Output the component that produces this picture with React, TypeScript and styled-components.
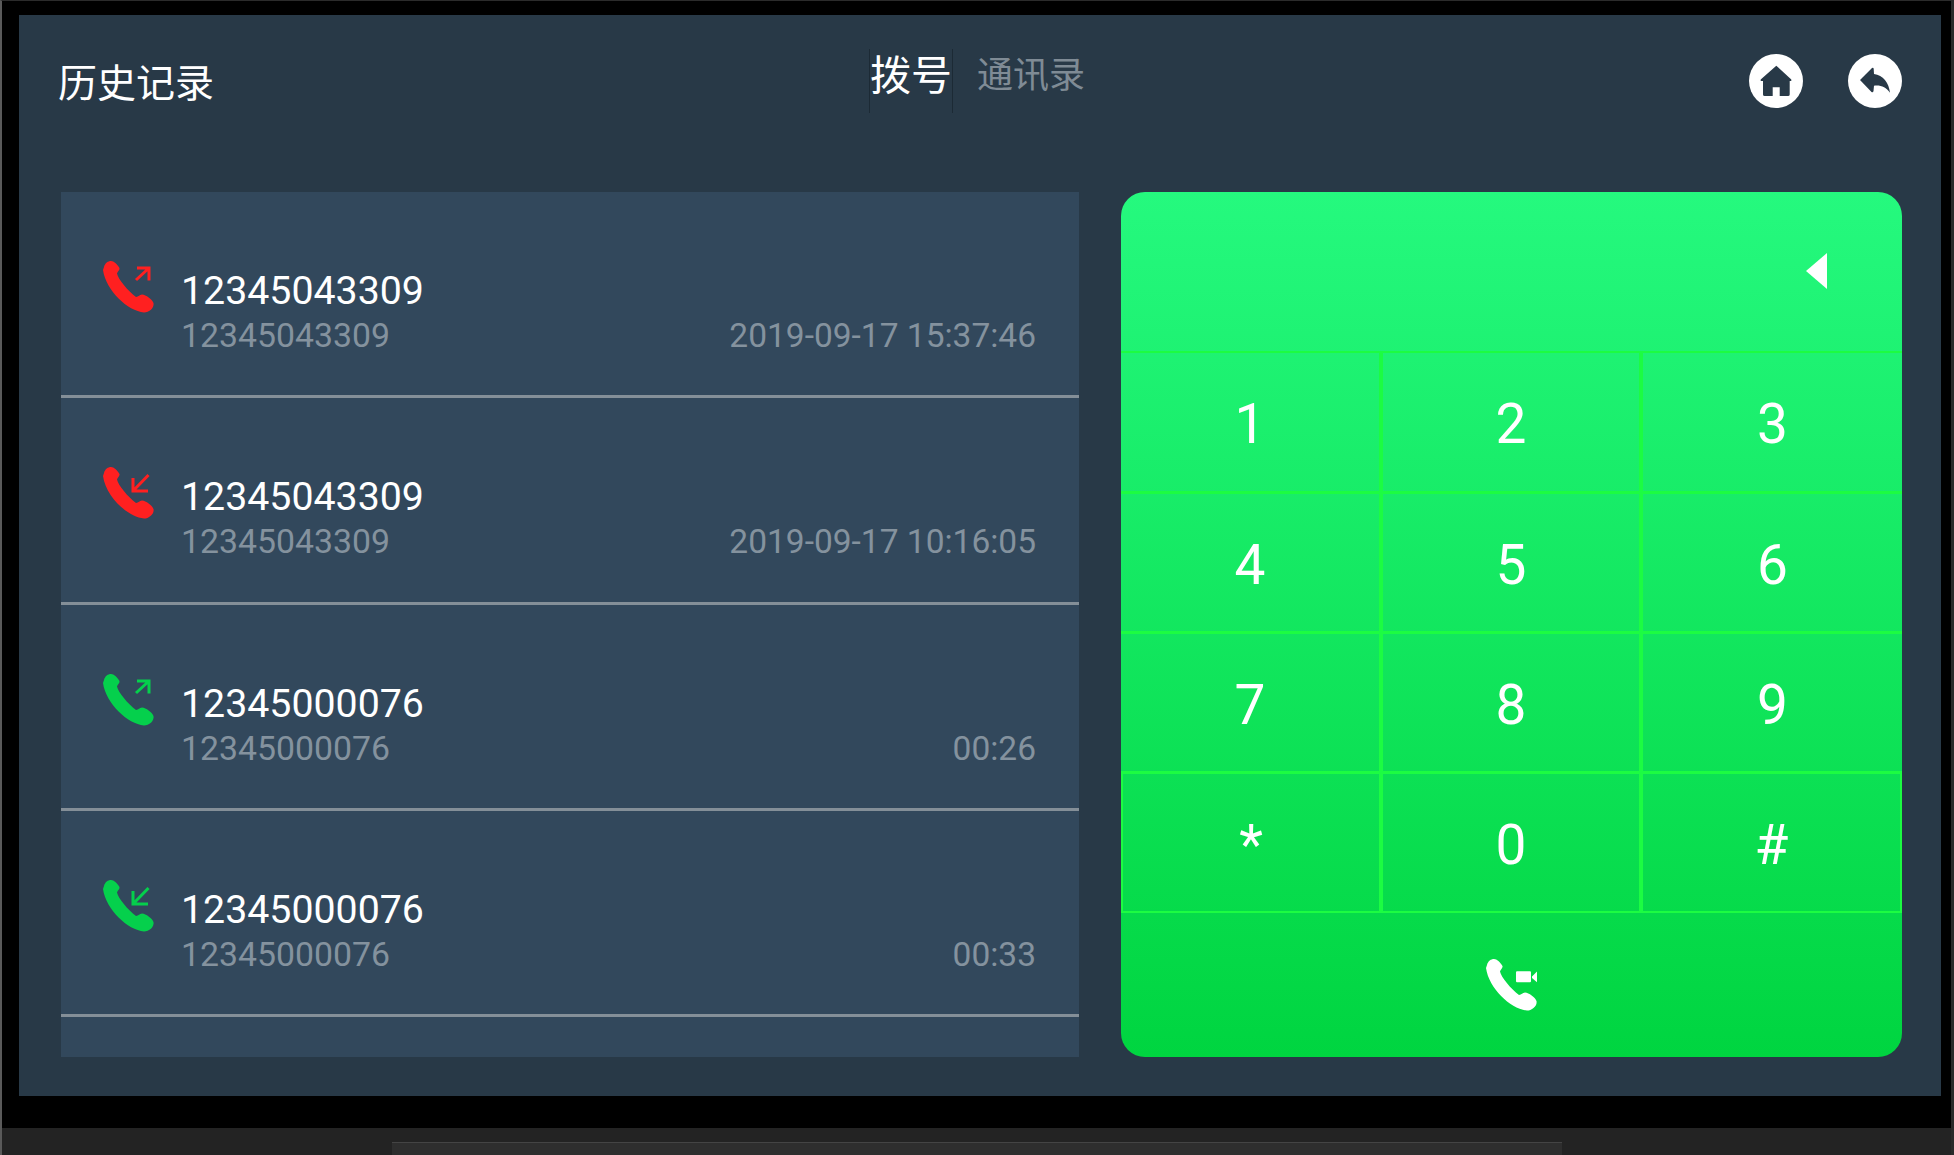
import React from 'react';
import styled, { createGlobalStyle } from 'styled-components';

const GlobalStyle = createGlobalStyle`
  html, body {
    margin: 0;
    padding: 0;
    background: #000;
  }
  body {
    font-family: Roboto, "Noto Sans CJK SC", sans-serif;
  }
`;

const Device = styled.div`
  width: 1954px;
  height: 1155px;
  box-sizing: border-box;
  overflow: hidden;
  background: #000;
  border-top: 1px solid #2b2b2b;
  border-left: 2px solid #5a5a5a;
  border-right: 3px solid #2a2a2a;
`;

const Screen = styled.div`
  width: 1922px;
  height: 1081px;
  margin: 14px 0 0 17px;
  background: #283947;
  display: flex;
  flex-direction: column;
`;

const Header = styled.header`
  height: 177px;
  flex-shrink: 0;
  display: flex;
  align-items: flex-start;
  padding: 0 39px 0 39px;
`;

const Title = styled.div`
  width: 811px;
  margin-top: 48px;
  font-size: 39px;
  line-height: 42px;
  color: #fff;
`;

const Tabs = styled.div`
  display: flex;
  margin-top: 34px;
`;

const Tab = styled.div<{ $active?: boolean }>`
  box-sizing: border-box;
  height: 64px;
  padding-top: 4px;
  margin-left: ${(p) => (p.$active ? '0' : '24px')};
  font-size: ${(p) => (p.$active ? '41px' : '36px')};
  line-height: 46px;
  color: ${(p) => (p.$active ? '#fff' : '#7f8b95')};
  border-left: ${(p) => (p.$active ? '1px solid #1c2a35' : 'none')};
  border-right: ${(p) => (p.$active ? '1px solid #1c2a35' : 'none')};
`;

const Actions = styled.div`
  display: flex;
  gap: 45px;
  margin-left: auto;
  margin-top: 39px;
`;

const RoundIcon = styled.svg`
  width: 54px;
  height: 54px;
  display: block;
`;

const Body = styled.div`
  flex: 1;
  display: flex;
  gap: 42px;
  padding: 0 39px 39px 42px;
  min-height: 0;
`;

const CallList = styled.div`
  width: 1018px;
  background: #32485c;
`;

const Row = styled.div`
  box-sizing: border-box;
  height: 206.33px;
  padding: 69px 43px 0 42px;
  display: flex;
  border-bottom: 3px solid #848f98;
`;

const CallIcon = styled.svg`
  width: 52px;
  height: 52px;
  flex-shrink: 0;
  color: ${(p) => p.color};
`;

const RowText = styled.div`
  flex: 1;
  margin-left: 26px;
  margin-top: 8px;
`;

const Name = styled.div`
  font-size: 39.3px;
  line-height: 44px;
  color: #fff;
`;

const SubRow = styled.div`
  display: flex;
  justify-content: space-between;
  margin-top: 3px;
  font-size: 33.8px;
  line-height: 40px;
  color: #84929e;
`;

const CallInfo = styled.span`
  font-size: 33.5px;
`;

const Keypad = styled.div`
  width: 781px;
  border-radius: 24px;
  overflow: hidden;
  display: flex;
  flex-direction: column;
  background: linear-gradient(180deg, #25f97e 0%, #00d540 100%);
`;

const Display = styled.div`
  box-sizing: border-box;
  height: 158.5px;
  padding: 61px 75px 0 0;
  display: flex;
  justify-content: flex-end;
`;

const Backspace = styled.div`
  width: 0;
  height: 0;
  border-style: solid;
  border-width: 18.5px 21px 18.5px 0;
  border-color: transparent #fff transparent transparent;
`;

const Keys = styled.div`
  display: grid;
  grid-template-columns: 262px 260px 259px;
  grid-auto-rows: 140px;
`;

const Key = styled.div<{ $col: number; $row: number }>`
  box-sizing: border-box;
  display: flex;
  align-items: center;
  justify-content: center;
  padding-top: 5px;
  font-size: 55px;
  color: #fff;
  border-top: ${(p) => (p.$row > 0 ? '3px' : '2px')} solid #1cfc42;
  border-left: ${(p) => (p.$row === 3 && p.$col === 0 ? '2px solid #1cfc42' : 'none')};
  border-right: ${(p) =>
    p.$col < 2 ? '4px solid #1cfc42' : p.$row === 3 ? '2px solid #1cfc42' : 'none'};
`;

const CallBar = styled.div`
  flex: 1;
  display: flex;
  align-items: center;
  justify-content: center;
  border-top: 2px solid #1cfc42;
`;

const CallGlyph = styled.svg`
  width: 52px;
  height: 54px;
  display: block;
  margin-top: 2px;
`;

const Base = styled.div`
  margin-top: 32px;
  height: 30px;
  box-sizing: border-box;
  padding: 14px 0 0 390px;
  background: #232323;
`;

const BaseInset = styled.div`
  width: 1170px;
  height: 16px;
  background: #2e2e2e;
  border-top: 1px solid #444;
`;

const HANDSET =
  'M1 6C2 2 5 0 8 0C11 0 14 3 16.5 7C17 9 14.5 10.5 14 12.5C15 18 25 30 33 36C35.5 36 36.5 33.5 39 33.5C43 34 49 38 50.5 42C51.5 47 46 51.5 41 51.5C25 50 3 30 0 9Z';

const PhoneIcon = ({ color, incoming }: { color: string; incoming?: boolean }) => (
  <CallIcon color={color} viewBox="0 0 52 52">
    <path d={HANDSET} fill="currentColor" />
    <path
      d={incoming ? 'M45.5 8L30 24M30 11V24H45' : 'M33 19L46 7M34 7H46V19.5'}
      fill="none"
      stroke="currentColor"
      strokeWidth="3"
    />
  </CallIcon>
);

const calls = [
  { number: '12345043309', info: '2019-09-17 15:37:46', color: '#ff2020', incoming: false },
  { number: '12345043309', info: '2019-09-17 10:16:05', color: '#ff2020', incoming: true },
  { number: '12345000076', info: '00:26', color: '#05d04c', incoming: false },
  { number: '12345000076', info: '00:33', color: '#05d04c', incoming: true },
];

const keys = ['1', '2', '3', '4', '5', '6', '7', '8', '9', '*', '0', '#'];

const App = () => {
  return (
    <Device>
      <GlobalStyle />
      <Screen>
        <Header>
          <Title>历史记录</Title>
          <Tabs>
            <Tab $active>拨号</Tab>
            <Tab>通讯录</Tab>
          </Tabs>
          <Actions>
            <RoundIcon viewBox="0 0 54 54">
              <circle cx="27" cy="27" r="27" fill="#fff" />
              <path
                d="M27.3 11.7L42.3 25.5V27H40.7V40.5Q40.7 42 39 42H30.7V33.3H23.7V42H15.7Q14 42 14 40.5V27H11.7V25.5Z"
                fill="#283947"
              />
            </RoundIcon>
            <RoundIcon viewBox="0 0 54 54">
              <circle cx="27" cy="27" r="27" fill="#fff" />
              <path
                d="M12 26L24 14Q25.5 13 25.7 15L26 20C35 21 41 29 42 38.7C38 33 33 31 26 31.7L25.5 37Q25 39 23.5 38Z"
                fill="#283947"
              />
            </RoundIcon>
          </Actions>
        </Header>
        <Body>
          <CallList>
            {calls.map((call, i) => (
              <Row key={i}>
                <PhoneIcon color={call.color} incoming={call.incoming} />
                <RowText>
                  <Name>{call.number}</Name>
                  <SubRow>
                    <span>{call.number}</span>
                    <CallInfo>{call.info}</CallInfo>
                  </SubRow>
                </RowText>
              </Row>
            ))}
          </CallList>
          <Keypad>
            <Display>
              <Backspace />
            </Display>
            <Keys>
              {keys.map((k, i) => (
                <Key key={k} $col={i % 3} $row={Math.floor(i / 3)}>
                  {k}
                </Key>
              ))}
            </Keys>
            <CallBar>
              <CallGlyph viewBox="0 0 52 54">
                <path d={HANDSET} fill="#fff" />
                <path d="M30 13.5Q30 12.3 31 12.3H44Q45 12.3 45 13.5V22Q45 23.3 44 23.3H31Q30 23.3 30 22ZM46 17.5L51 12.5V23.3L46 19Z" fill="#fff" />
              </CallGlyph>
            </CallBar>
          </Keypad>
        </Body>
      </Screen>
      <Base>
        <BaseInset />
      </Base>
    </Device>
  );
};

export default App;
